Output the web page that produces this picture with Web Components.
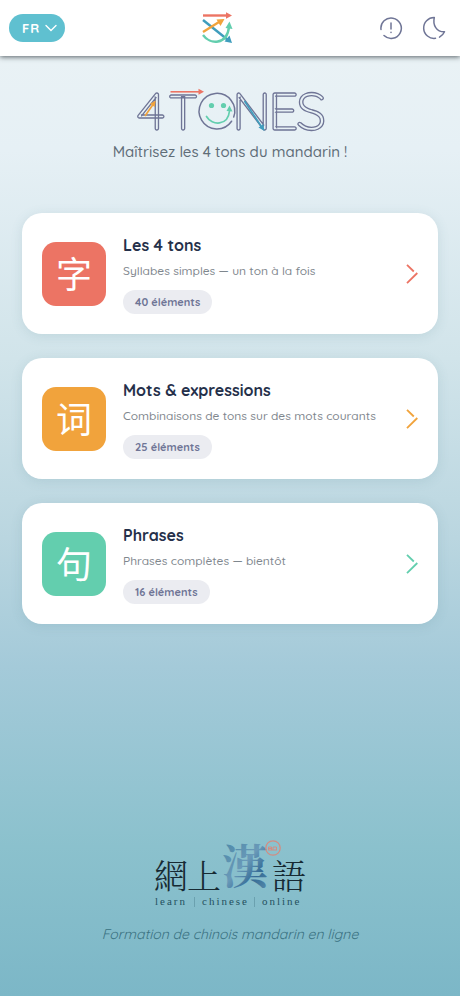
<!DOCTYPE html>
<html lang="fr">
<head>
<meta charset="utf-8">
<meta name="viewport" content="width=device-width, initial-scale=1">
<title>4 Tones</title>
<style>
  html {
    height: 100%;
  }

  body {
    margin: 0;
    min-height: 100%;
    font-family: Quicksand, Lato, "Noto Sans CJK SC", sans-serif;
    color: #25304a;
    --coral: #ec7464;
    --orange: #f1a33c;
    --green: #63ceae;
    --blue: #3f9dbd;
    --slate: #6f7596;
    background: linear-gradient(180deg, #ebf3f5 0%, #e6f0f5 15%, #d1e4ea 36%, #bad6e0 54%, #a4cad9 67%, #8bc1cd 85%, #7cb7c7 100%);
  }
</style>
</head>
<body>
<tones-app></tones-app>

<script>
class TopBar extends HTMLElement {
  constructor() {
    super();

    this.attachShadow({ mode: 'open' });
    this.shadowRoot.innerHTML = `
      <style>
        :host {
          display: block;
        }

        header {
          display: flex;
          justify-content: space-between;
          align-items: center;
          height: 56px;
          padding: 0 6px 0 9px;
          box-sizing: border-box;
          background: #fff;
          box-shadow: 0 1px 5px rgba(50, 60, 65, 0.8);
        }

        .lang {
          position: relative;
          display: flex;
        }

        select {
          appearance: none;
          width: 56px;
          height: 28px;
          padding: 0 0 0 13px;
          border: 0;
          border-radius: 14px;
          background: #5fc0d0;
          color: #fff;
          font: 700 13px Quicksand, Lato, sans-serif;
          letter-spacing: 1px;
          cursor: pointer;
        }

        .lang svg {
          position: absolute;
          right: 8px;
          top: 10px;
          pointer-events: none;
        }

        .actions {
          display: flex;
          gap: 3px;
        }

        button {
          display: flex;
          padding: 0 8px;
          border: 0;
          background: none;
          color: var(--slate);
          cursor: pointer;
        }
      </style>
      <header>
        <div class="lang">
          <select aria-label="Langue">
            <option>FR</option>
            <option>EN</option>
          </select>
          <svg width="12" height="8" viewBox="0 0 12 8" fill="none" stroke="#fff" stroke-width="1.4" stroke-linecap="round"><path d="M1 1.5 6 6.5 11 1.5"/></svg>
        </div>
        <svg width="32" height="32" viewBox="0 0 32 32" fill="none" stroke-width="2.4">
          <g stroke="var(--blue)"><path d="M1 8 26 28"/><path d="m30 31-7.500-1.500 5-6z" fill="var(--blue)" stroke="none"/></g>
          <g stroke="var(--orange)"><path d="M1 20 17 10"/><path d="m22.500 7-8 .5 4 6.500z" fill="var(--orange)" stroke="none"/></g>
          <g stroke="var(--green)"><path d="M1 23C8 33 25 33 27 15"/><path d="m27.500 9.500-4 6.500 7 1z" fill="var(--green)" stroke="none"/></g>
          <g stroke="var(--coral)"><path d="M1 3.500H25"/><path d="m30 3.500-6-3.200v6.400z" fill="var(--coral)" stroke="none"/></g>
        </svg>
        <div class="actions">
          <button type="button" aria-label="Informations">
            <svg width="24" height="24" viewBox="0 0 24 24" fill="none" stroke="currentColor" stroke-width="1.500" stroke-linecap="round">
              <path d="M2 13.500A10.200 10.200 0 1 1 5 19.500"/><path d="M12 7v6"/><path d="M12 16.300v.2"/>
            </svg>
          </button>
          <button type="button" aria-label="Mode sombre">
            <svg width="24" height="24" viewBox="0 0 24 24" fill="none" stroke="currentColor" stroke-width="1.500" stroke-linecap="round" stroke-linejoin="round">
              <path d="M13.500 22.300A10.400 10.400 0 1 1 12.300 1.600C10.500 9 14.500 16 22.500 15.800Q21 19.300 17.500 21.200"/>
            </svg>
          </button>
        </div>
      </header>
    `;
  }
}

class TonesHero extends HTMLElement {
  constructor() {
    super();

    this.attachShadow({ mode: 'open' });
    this.shadowRoot.innerHTML = `
      <style>
        :host {
          display: block;
          padding-top: 34px;
          text-align: center;
        }

        h1 {
          margin: 0;
          line-height: 0;
        }

        svg {
          overflow: visible;
        }

        .letters {
          font-family: Quicksand, Lato, sans-serif;
          font-size: 54px;
          font-weight: 400;
        }

        .letters .short {
          font-size: 50px;
        }

        p {
          margin: 8px 0 0;
          font-size: 15px;
          font-weight: 500;
          line-height: 24px;
          color: #5f6d78;
        }
      </style>
      <h1>
        <svg width="190" height="42" viewBox="0 0 190 42" fill="none">
          <g class="letters" stroke="var(--slate)" stroke-width="1.300">
            <text x="2" y="40">4</text>
            <text class="short" x="33" y="40">T</text>
            <text x="97" y="40">N</text>
            <text x="133" y="40">E</text>
            <text x="161" y="40">S</text>
          </g>
          <path d="M96.600 31.200A17.800 17.800 0 1 1 98.700 27.100" stroke="var(--slate)" stroke-width="1.500" stroke-linecap="round"/>
          <g fill="var(--green)"><circle cx="76.500" cy="15.500" r="2.600"/><circle cx="88.500" cy="15.500" r="2.600"/><path d="m94.500 15.500-3 5.500 6 .5z"/></g>
          <path d="M71.500 26.500C77 36 93 36 94.500 21" stroke="var(--green)" stroke-width="1.700" stroke-linecap="round"/>
          <path d="M35.500 1.800H64" stroke="var(--coral)" stroke-width="1.600"/><path d="m69 1.800-5.500-3v6z" fill="var(--coral)"/>
          <path d="M10 26 18 14.500" stroke="var(--orange)" stroke-width="1.700"/><path d="m20.800 10.500-5.800 3.200 4.600 3.300z" fill="var(--orange)"/>
          <path d="M109.500 11 126 36" stroke="var(--blue)" stroke-width="1.700"/><path d="m129.500 41-6-3.500 4.800-3.500z" fill="var(--blue)"/>
        </svg>
      </h1>
      <p><slot></slot></p>
    `;
  }
}

class LevelCard extends HTMLElement {
  constructor() {
    super();

    this.attachShadow({ mode: 'open' });
    this.shadowRoot.innerHTML = `
      <style>
        :host {
          display: block;
        }

        a {
          display: flex;
          align-items: center;
          gap: 17px;
          padding: 20px;
          border-radius: 20px;
          background: #fff;
          box-shadow: 0 2px 12px rgba(80, 130, 145, 0.16);
          color: inherit;
          text-decoration: none;
        }

        .tile {
          flex: none;
          display: grid;
          place-items: center;
          width: 64px;
          height: 64px;
          padding-bottom: 4px;
          box-sizing: border-box;
          border-radius: 14px;
          background: var(--accent);
          color: #fff;
          font: 400 36px/36px "Noto Sans CJK SC", sans-serif;
        }

        .body {
          flex: 1;
          min-width: 0;
        }

        h2 {
          margin: 0;
          font-size: 16px;
          line-height: 24px;
        }

        p {
          margin: 4px 0 10px;
          font-size: 12px;
          font-weight: 500;
          line-height: 19px;
          color: #7f878e;
        }

        .count {
          display: inline-block;
          vertical-align: top;
          padding: 0 12px;
          border-radius: 12px;
          background: #ebecf1;
          color: var(--slate);
          font-size: 11px;
          font-weight: 700;
          line-height: 24px;
        }

        .arrow {
          flex: none;
        }
      </style>
      <a href="#">
        <span class="tile" lang="zh"><slot name="glyph"></slot></span>
        <div class="body">
          <h2><slot name="title"></slot></h2>
          <p><slot></slot></p>
          <span class="count"><slot name="count"></slot></span>
        </div>
        <svg class="arrow" width="12" height="20" viewBox="0 0 12 20" fill="none" stroke="var(--accent)" stroke-width="1.800"><path d="M1 .8 7.800 7.500M11.300 9 1 19.200"/></svg>
      </a>
    `;
  }
}

class SchoolFooter extends HTMLElement {
  constructor() {
    super();

    this.attachShadow({ mode: 'open' });
    this.shadowRoot.innerHTML = `
      <style>
        :host {
          display: block;
          padding-bottom: 50px;
          text-align: center;
        }

        svg {
          display: block;
          margin: 0 auto;
          overflow: visible;
        }

        .han {
          font-family: "Liberation Serif", "Noto Serif CJK TC", "Noto Sans CJK TC", serif;
          font-size: 34px;
          font-weight: 300;
        }

        .ink {
          font-size: 46px;
          font-weight: 700;
        }

        .latin {
          font-family: "Liberation Serif", serif;
          font-size: 11px;
          letter-spacing: 2px;
        }

        p {
          margin: 13px 0 0;
          font-size: 14px;
          font-style: italic;
          line-height: 23px;
          color: #3a7282;
        }
      </style>
      <svg width="154" height="72" viewBox="0 0 154 72" lang="zh-Hant">
        <defs>
          <linearGradient id="ink" x1="0" y1="0" x2="1" y2="1">
            <stop offset="0" stop-color="#4c89a8"/>
            <stop offset=".45" stop-color="#6999b8"/>
            <stop offset=".7" stop-color="#356c96"/>
            <stop offset="1" stop-color="#5d92b0"/>
          </linearGradient>
        </defs>
        <g class="han" fill="#172a33">
          <text x="1" y="51">網</text>
          <text x="34" y="51">上</text>
          <text x="119" y="51">語</text>
        </g>
        <text class="han ink" x="69" y="45" fill="url(#ink)">漢</text>
        <circle cx="120" cy="10" r="7.200" fill="none" stroke="#d38c82" stroke-width="1.300"/>
        <path d="M115.500 12v-3h3v3m0-1.500h-3m4.500 1.500v-3h3.500v3m-8.500 0h9" fill="none" stroke="#d38c82"/>
        <g class="latin" fill="#24505e">
          <text x="2" y="67">learn</text>
          <text x="49" y="67">chinese</text>
          <text x="109" y="67">online</text>
        </g>
        <path d="M41.500 59v10M101.500 59v10" stroke="#6ba1af"/>
      </svg>
      <p><slot></slot></p>
    `;
  }
}

class TonesApp extends HTMLElement {
  constructor() {
    super();

    this.attachShadow({ mode: 'open' });
    this.shadowRoot.innerHTML = `
      <style>
        :host {
          display: flex;
          flex-direction: column;
          min-height: 100vh;
        }

        main {
          flex: 1;
          padding: 0 22px 24px;
        }

        .cards {
          display: grid;
          gap: 24px;
          margin-top: 49px;
        }

        .red { --accent: var(--coral); }
        .amber { --accent: var(--orange); }
        .mint { --accent: var(--green); }
      </style>
      <top-bar></top-bar>
      <main>
        <tones-hero>Maîtrisez les 4 tons du mandarin !</tones-hero>
        <div class="cards">
          <level-card class="red">
            <span slot="glyph">字</span>
            <span slot="title">Les 4 tons</span>
            Syllabes simples — un ton à la fois
            <span slot="count">40 éléments</span>
          </level-card>
          <level-card class="amber">
            <span slot="glyph">词</span>
            <span slot="title">Mots &amp; expressions</span>
            Combinaisons de tons sur des mots courants
            <span slot="count">25 éléments</span>
          </level-card>
          <level-card class="mint">
            <span slot="glyph">句</span>
            <span slot="title">Phrases</span>
            Phrases complètes — bientôt
            <span slot="count">16 éléments</span>
          </level-card>
        </div>
      </main>
      <school-footer>Formation de chinois mandarin en ligne</school-footer>
    `;
  }
}

customElements.define('top-bar', TopBar);
customElements.define('tones-hero', TonesHero);
customElements.define('level-card', LevelCard);
customElements.define('school-footer', SchoolFooter);
customElements.define('tones-app', TonesApp);
</script>
</body>
</html>
